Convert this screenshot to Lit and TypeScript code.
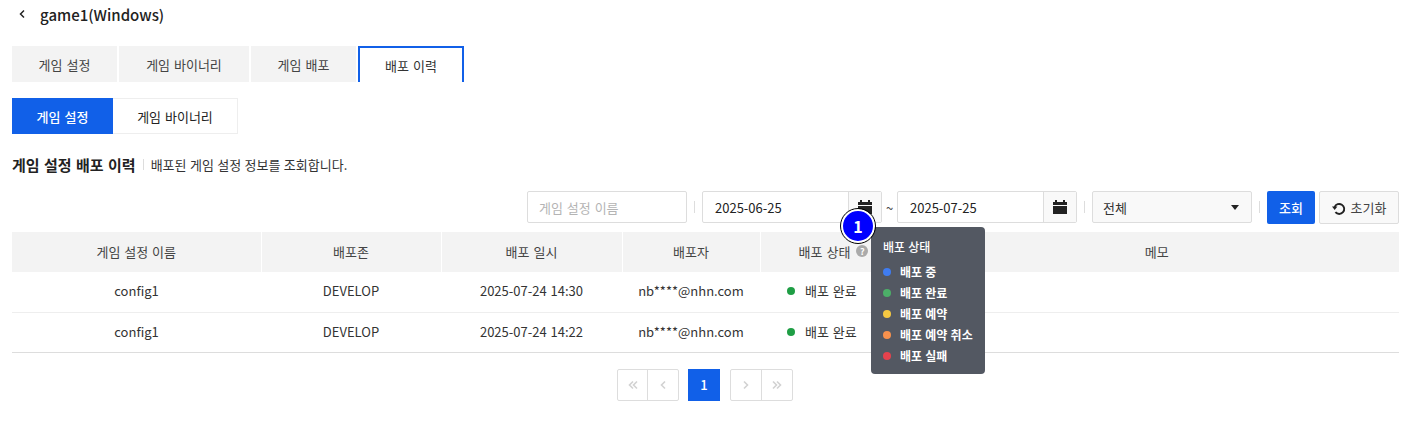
import { html, css, LitElement, TemplateResult } from 'lit';
import { customElement } from 'lit/decorators.js';

const calendar = html`<svg width="16" height="16" viewBox="0 0 16 16">
  <path fill="#222" d="M3 1h2v2h6V1h2v2h2v3H1V3h2zM1 7h14v8H1z" />
</svg>`;

const rows = [
  { name: 'config1', zone: 'DEVELOP', date: '2025-07-24 14:30', user: 'nb****@nhn.com' },
  { name: 'config1', zone: 'DEVELOP', date: '2025-07-24 14:22', user: 'nb****@nhn.com' },
];

const legend = [
  { label: '배포 중', color: '#3f7cf0' },
  { label: '배포 완료', color: '#4caf68' },
  { label: '배포 예약', color: '#f5c842' },
  { label: '배포 예약 취소', color: '#f7914d' },
  { label: '배포 실패', color: '#e5424d' },
];

@customElement('app-root')
export class AppRoot extends LitElement {
  static styles = css`
    :host {
      display: block;
      position: relative;
      height: 422px;
      box-sizing: border-box;
      padding: 0 13px 0 12px;
      overflow: hidden;
      background: #fff;
      color: #222;
      font-family: 'Noto Sans CJK KR', 'Noto Sans', sans-serif;
      font-size: 13px;
      word-spacing: 1px;
    }

    .title {
      display: flex;
      align-items: center;
      height: 28px;
      gap: 15px;
      padding-left: 7px;
      font-size: 15px;
      font-weight: 500;
      color: #222;
    }

    .tabs {
      display: flex;
      gap: 2px;
      margin-top: 18px;
      height: 36px;
    }

    .tab {
      display: flex;
      align-items: center;
      justify-content: center;
      box-sizing: border-box;
      background: #f3f3f3;
      color: #444;
    }

    .tab.on {
      background: #fff;
      color: #333;
      border: 2px solid #1160e8;
      border-bottom: none;
    }

    .subtabs {
      display: flex;
      margin-top: 16px;
      height: 36px;
    }

    .subtab {
      display: flex;
      align-items: center;
      justify-content: center;
      box-sizing: border-box;
      border: 1px solid #eee;
      border-left: none;
      color: #222;
    }

    .subtab.on {
      background: #1160e8;
      border: none;
      color: #fff;
      font-weight: 500;
    }

    .heading {
      display: flex;
      align-items: center;
      height: 20px;
      margin-top: 20px;
    }

    .heading b {
      font-size: 15px;
      font-weight: 700;
      color: #222;
    }

    .heading i {
      width: 1px;
      height: 11px;
      margin: 0 7px;
      background: #ddd;
    }

    .heading span {
      color: #333;
      word-spacing: 0.5px;
    }

    .toolbar {
      display: flex;
      justify-content: flex-end;
      align-items: flex-start;
      margin-top: 17px;
      height: 41px;
    }

    .field {
      display: flex;
      align-items: center;
      box-sizing: border-box;
      height: 32px;
      border: 1px solid #ddd;
      border-radius: 2px;
      background: #fff;
    }

    .search {
      width: 160px;
      padding-left: 11px;
      color: #b4b4b4;
    }

    .sep {
      width: 1px;
      height: 12px;
      margin: 10px 7px 0;
      background: #ddd;
    }

    .date {
      width: 180px;
    }

    .date span {
      flex: 1;
      padding-left: 12px;
      color: #222;
    }

    .cal {
      display: flex;
      align-items: center;
      justify-content: center;
      width: 32px;
      height: 30px;
      border-left: 1px solid #ddd;
      background: #f9f9f9;
    }

    .tilde {
      width: 15px;
      margin-top: 7px;
      text-align: center;
      color: #444;
    }

    .select {
      justify-content: space-between;
      width: 160px;
      padding: 0 12px 0 10px;
      background: #f9f9f9;
      color: #333;
    }

    .caret {
      width: 0;
      height: 0;
      border-left: 4px solid transparent;
      border-right: 4px solid transparent;
      border-top: 5px solid #222;
    }

    .btn {
      display: flex;
      align-items: center;
      justify-content: center;
      box-sizing: border-box;
      height: 33px;
      border-radius: 2px;
    }

    .btn.primary {
      width: 48px;
      background: #1160e8;
      color: #fff;
      font-weight: 500;
    }

    .btn.reset {
      gap: 5px;
      width: 80px;
      margin-left: 4px;
      border: 1px solid #ddd;
      background: #f9f9f9;
      color: #444;
    }

    table {
      width: 100%;
      border-collapse: collapse;
      table-layout: fixed;
    }

    th {
      height: 40px;
      padding: 0 0 2px;
      box-sizing: border-box;
      background: #f3f3f3;
      border-left: 1px solid #fff;
      font-weight: 400;
      color: #444;
    }

    th:first-child {
      border-left: none;
    }

    td {
      height: 40px;
      padding: 0 0 2px;
      box-sizing: border-box;
      border-bottom: 1px solid #eee;
      text-align: center;
      color: #333;
    }

    tr:last-child td {
      padding-bottom: 1px;
      border-bottom-color: #ddd;
    }

    .head-status {
      display: inline-flex;
      align-items: center;
      gap: 6px;
      margin-left: -7px;
    }

    .help {
      display: flex;
      align-items: center;
      justify-content: center;
      width: 12px;
      height: 12px;
      border-radius: 50%;
      background: #aaa;
      color: #fff;
      font-size: 9px;
      font-weight: 700;
      line-height: 1;
    }

    .status {
      display: flex;
      align-items: center;
      gap: 10px;
      padding-left: 27px;
    }

    .dot {
      flex: none;
      width: 8px;
      height: 8px;
      border-radius: 50%;
      background: #1f9e45;
    }

    .pager {
      display: flex;
      justify-content: center;
      margin-top: 16px;
      margin-left: -1px;
    }

    .group {
      display: flex;
      box-sizing: border-box;
      height: 32px;
      border: 1px solid #ddd;
      border-radius: 2px;
    }

    .group span {
      display: flex;
      align-items: center;
      justify-content: center;
      width: 30px;
    }

    .group.left span:first-child {
      width: 29px;
    }

    .group span + span {
      border-left: 1px solid #ddd;
    }

    .page {
      display: flex;
      align-items: center;
      justify-content: center;
      width: 32px;
      height: 32px;
      margin: 0 10px 0 9px;
      background: #1160e8;
      color: #fff;
      font-weight: 500;
    }

    .marker {
      position: absolute;
      left: 841px;
      top: 209px;
      display: flex;
      align-items: center;
      justify-content: center;
      box-sizing: border-box;
      width: 34px;
      height: 34px;
      border: 2px solid #fff;
      border-radius: 50%;
      outline: 1px solid #000;
      background: #0000ff;
      color: #fff;
      font-size: 16px;
      font-weight: 700;
      z-index: 2;
    }

    .tip {
      position: absolute;
      left: 871px;
      top: 227px;
      box-sizing: border-box;
      width: 114px;
      height: 147px;
      padding: 12px 12px 0;
      border-radius: 4px;
      background: #535862;
      color: #fff;
      font-size: 12px;
      word-spacing: 0.5px;
    }

    .tip h4 {
      margin: 0 0 6px;
      height: 16px;
      font-size: 12px;
      line-height: 16px;
      font-weight: 500;
    }

    .tip div {
      display: flex;
      align-items: center;
      gap: 9px;
      height: 21px;
      font-weight: 700;
      white-space: nowrap;
    }

    .tip em {
      flex: none;
      width: 8px;
      height: 8px;
      border-radius: 50%;
    }
  `;

  chevrons(d: string): TemplateResult {
    return html`<svg width="12" height="12" viewBox="0 0 12 12">
      <path d=${d} fill="none" stroke="#d2d2d2" stroke-width="1.6" />
    </svg>`;
  }

  render(): TemplateResult {
    return html`
      <div class="title">
        <svg width="6" height="10" viewBox="0 0 6 10">
          <path d="M5 1.5 1.5 5 5 8.5" fill="none" stroke="#222" stroke-width="1.5" />
        </svg>
        <span>game1(Windows)</span>
      </div>
      <div class="tabs">
        <div class="tab" style="width:105px">게임 설정</div>
        <div class="tab" style="width:130px">게임 바이너리</div>
        <div class="tab" style="width:105px">게임 배포</div>
        <div class="tab on" style="width:106px">배포 이력</div>
      </div>
      <div class="subtabs">
        <div class="subtab on" style="width:101px">게임 설정</div>
        <div class="subtab" style="width:125px">게임 바이너리</div>
      </div>
      <div class="heading">
        <b>게임 설정 배포 이력</b><i></i><span>배포된 게임 설정 정보를 조회합니다.</span>
      </div>
      <div class="toolbar">
        <div class="field search">게임 설정 이름</div>
        <div class="sep"></div>
        <div class="field date"><span>2025-06-25</span><div class="cal">${calendar}</div></div>
        <div class="tilde">~</div>
        <div class="field date"><span>2025-07-25</span><div class="cal">${calendar}</div></div>
        <div class="sep"></div>
        <div class="field select">전체<span class="caret"></span></div>
        <div class="sep"></div>
        <div class="btn primary">조회</div>
        <div class="btn reset">
          <svg width="14" height="14" viewBox="0 0 14 14">
            <path d="M3.4 11.2A5 5 0 1 0 2.6 6" fill="none" stroke="#222" stroke-width="1.9" />
            <path d="M0 5.4 5.4 5.4 2.7 9z" fill="#222" />
          </svg>
          초기화
        </div>
      </div>
      <table>
        <colgroup>
          <col style="width:249px" />
          <col style="width:180px" />
          <col style="width:181px" />
          <col style="width:138px" />
          <col style="width:154px" />
          <col />
        </colgroup>
        <thead>
          <tr>
            <th>게임 설정 이름</th>
            <th>배포존</th>
            <th>배포 일시</th>
            <th>배포자</th>
            <th><span class="head-status">배포 상태<span class="help">?</span></span></th>
            <th>메모</th>
          </tr>
        </thead>
        <tbody>
          ${rows.map(
            (r) => html`<tr>
              <td>${r.name}</td>
              <td>${r.zone}</td>
              <td>${r.date}</td>
              <td>${r.user}</td>
              <td><div class="status"><span class="dot"></span>배포 완료</div></td>
              <td></td>
            </tr>`
          )}
        </tbody>
      </table>
      <div class="pager">
        <div class="group left">
          <span>${this.chevrons('M6 2.5 2.5 6 6 9.5M10 2.5 6.5 6 10 9.5')}</span>
          <span>${this.chevrons('M8 2.5 4.5 6 8 9.5')}</span>
        </div>
        <div class="page">1</div>
        <div class="group">
          <span>${this.chevrons('M4 2.5 7.5 6 4 9.5')}</span>
          <span>${this.chevrons('M2 2.5 5.5 6 2 9.5M6 2.5 9.5 6 6 9.5')}</span>
        </div>
      </div>
      <div class="tip">
        <h4>배포 상태</h4>
        ${legend.map(
          (l) => html`<div><em style="background:${l.color}"></em>${l.label}</div>`
        )}
      </div>
      <div class="marker">1</div>
    `;
  }
}
